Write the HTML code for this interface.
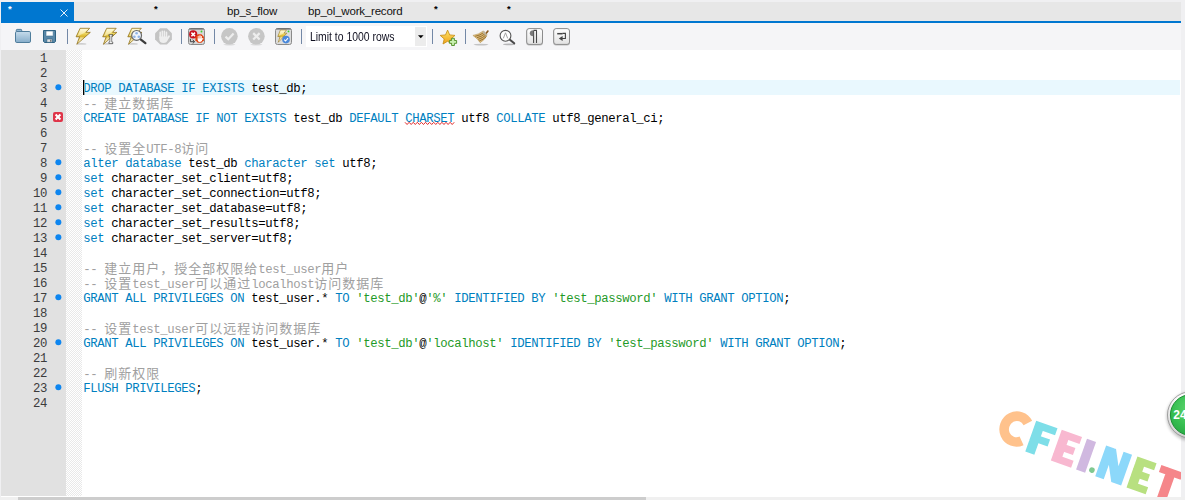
<!DOCTYPE html>
<html><head><meta charset="utf-8"><title>SQL Editor</title>
<style>
html,body{margin:0;padding:0}
body{width:1185px;height:500px;overflow:hidden;position:relative;background:#f0f0f2;font-family:"Liberation Sans",sans-serif}
#tabs{position:absolute;left:1px;top:2px;width:1180px;height:19px;background:#e7e7e7}
#tabline{position:absolute;left:1px;top:21px;width:1180px;height:2px;background:#0077d0}
#tab1{position:absolute;left:0;top:0;width:73px;height:19px;background:#0077d0}
.tt{position:absolute;top:2px;font-size:11.5px;line-height:14px;color:#111;white-space:nowrap;letter-spacing:-0.2px}
.as{position:absolute;top:1px;font-size:9.5px;line-height:12px;color:#000;font-weight:bold}
#tool{position:absolute;left:1px;top:23px;width:1180px;height:27px;background:#f5f5f7}
#ed{position:absolute;left:1px;top:50px;width:1180px;height:447px;background:#fff;overflow:hidden}
#gut{position:absolute;left:1px;top:50px;width:65px;height:446px;background:#e1e1e1}
#fold{position:absolute;left:66px;top:50px;width:16px;height:446px;background:conic-gradient(#e9e9e9 0 25%,#fff 0 50%,#e9e9e9 0 75%,#fff 0) 0 0/2px 2px}
#hl{position:absolute;left:83px;top:80px;width:1097px;height:15px;background:#e9f8fe}
#caret{position:absolute;left:83px;top:80px;width:1px;height:15px;background:#000;border-right:1px solid #9aa}
.l,.n{position:absolute;height:15px;line-height:15px;font-family:"Liberation Mono",monospace;font-size:12.3px;letter-spacing:-0.38px;white-space:pre;color:#000}
.l{left:83.2px}
.n{left:1px;width:46px;text-align:right;color:#3c3c3c}
.k{color:#007fbf}.c{color:#a0a0a0}.s{color:#1f9a28}
.z{font-family:"Liberation Mono","Noto Sans CJK SC",monospace;font-size:13px;letter-spacing:1px;line-height:15px}
.d{position:absolute;left:54.5px;width:6.5px;height:6.5px;border-radius:50%;background:#0e86f0}
#err{position:absolute;left:53px;top:112px;width:10px;height:10px}
#sb{position:absolute;left:0;top:497px;width:1185px;height:3px;background:#f0f0f0}
#sbt{position:absolute;left:18px;top:497px;width:628px;height:3px;background:#cdcdcd}
#wm{position:absolute;left:0;top:0}
</style></head><body>
<div id="tabs"><div id="tab1"></div>
<span class="as" style="left:7px;color:#fff">*</span>
<svg style="position:absolute;left:59px;top:6.5px" width="8" height="8" viewBox="0 0 8 8"><path d="M0.5 0.5L7.5 7.5M7.5 0.5L0.5 7.5" stroke="#e6f0fa" stroke-width="1" fill="none"/></svg>
<span class="as" style="left:153px">*</span>
<span class="tt" style="left:226px">bp_s_flow</span>
<span class="tt" style="left:307px">bp_ol_work_record</span>
<span class="as" style="left:433px">*</span>
<span class="as" style="left:506px">*</span>
</div>
<div id="tabline"></div>
<div id="tool"></div>
<div id="dd" style="position:absolute;left:306px;top:26px;width:121px;height:21px;background:#fff"></div>
<div style="position:absolute;left:415px;top:27px;width:11px;height:19px;background:#ececec"></div>
<div id="ddt" style="position:absolute;left:310px;top:28px;height:17px;line-height:17px;font-size:13px;color:#101020;white-space:nowrap;transform:scaleX(0.8);transform-origin:0 0">Limit to 1000 rows</div>
<svg id="ico" style="position:absolute;left:0;top:23px" width="1185" height="27" viewBox="0 23 1185 27">
<defs>
<linearGradient id="fo" x1="0" y1="0" x2="0" y2="1"><stop offset="0" stop-color="#c6dcec"/><stop offset="1" stop-color="#86adca"/></linearGradient>
<linearGradient id="ly" x1="0" y1="0" x2="0" y2="1"><stop offset="0" stop-color="#fff9cc"/><stop offset="0.3" stop-color="#f0da68"/><stop offset="0.5" stop-color="#d9b62e"/><stop offset="0.72" stop-color="#ead478"/><stop offset="1" stop-color="#f8efbc"/></linearGradient>
<linearGradient id="bx" x1="0" y1="0" x2="0" y2="1"><stop offset="0" stop-color="#ffffff"/><stop offset="1" stop-color="#e2e2e2"/></linearGradient>
<linearGradient id="st" x1="0" y1="0" x2="0" y2="1"><stop offset="0" stop-color="#ffe66a"/><stop offset="1" stop-color="#eea018"/></linearGradient>
<filter id="sh" x="-30%" y="-100%" width="160%" height="300%"><feGaussianBlur stdDeviation="0.6"/></filter>
<g id="bolt"><path d="M80.1 28.3H89.6L85.9 32.4H90.3L76.8 44.3L79.6 36.8H76.1Z" fill="url(#ly)" stroke="#8e6c14" stroke-width="0.75" stroke-linejoin="round"/><path d="M80.7 29.2H87.6L84.2 33.1L78.2 35.9H77.4Z" fill="#fff" opacity="0.45"/><path d="M80.4 37.2L78.3 42.6L84 37.4Z" fill="#fff" opacity="0.35"/></g>
<g id="hand"><path d="M-3.3 -4.2V1M-1.2 -5.3V1M0.9 -5.3V1M3 -4.2V1" fill="none" stroke-width="1.55" stroke-linecap="round"/><path d="M5.5 -0.4L3 3.6" fill="none" stroke-width="1.9" stroke-linecap="round"/><path d="M-4.2 0H3.9V3.2Q3.6 6.4 0 6.4Q-4.2 6.4 -4.2 2.5Z" stroke="none"/></g>
</defs>
<!-- separators -->
<g fill="#7388a6"><rect x="67" y="29" width="1" height="15"/><rect x="181" y="29" width="1" height="15"/><rect x="214" y="29" width="1" height="15"/><rect x="301" y="29" width="1" height="15"/><rect x="432" y="29" width="1" height="15"/><rect x="465" y="29" width="1" height="15"/></g>
<!-- folder -->
<path d="M16.3 31.5V30.2Q16.3 29.4 17.1 29.4H20.9Q21.7 29.4 21.7 30.2V31.5" fill="#8fb4d0" stroke="#4f7d9c" stroke-width="1"/>
<rect x="15.5" y="31.5" width="15" height="11" rx="1.3" fill="url(#fo)" stroke="#4f7d9c" stroke-width="1"/>
<!-- save -->
<path d="M43.5 30.5H55.5V41.3L54.5 42.5H44.5L43.5 41.3Z" fill="#5a88a8" stroke="#2f6282" stroke-width="1"/>
<rect x="46" y="31" width="7.2" height="5" rx="0.6" fill="#fff" stroke="#3c6e8e" stroke-width="0.6"/>
<rect x="46.9" y="39" width="5.3" height="3.2" fill="#e4e4e4" stroke="#2f6282" stroke-width="0.6"/><rect x="50.3" y="39.7" width="1" height="2" fill="#4a4a4a"/>
<!-- bolts -->
<ellipse cx="81.5" cy="43.9" rx="5" ry="0.7" fill="#000" opacity="0.22" filter="url(#sh)"/>
<use href="#bolt"/>
<ellipse cx="108" cy="43.9" rx="5" ry="0.7" fill="#000" opacity="0.22" filter="url(#sh)"/>
<use href="#bolt" x="26.6"/>
<path d="M109.2 34.7H112.6V35.6H111.55V42.3H112.6V43.2H109.2V42.3H110.25V35.6H109.2Z" fill="#fff" stroke="#2a2a2a" stroke-width="1.15" paint-order="stroke" stroke-linejoin="round"/>
<ellipse cx="133" cy="43.9" rx="5" ry="0.7" fill="#000" opacity="0.22" filter="url(#sh)"/>
<use href="#bolt" x="51.7"/>
<path d="M140.6 39.4L145.4 43.2" stroke="#3c3c3c" stroke-width="2.2" stroke-linecap="round"/>
<circle cx="136.6" cy="35.4" r="4.9" fill="#f1f5fb" stroke="#686868" stroke-width="1.2"/>
<circle cx="136.6" cy="33.3" r="1.3" fill="#8fb4e6"/><circle cx="134.4" cy="36.7" r="1.3" fill="#8fb4e6"/><circle cx="138.8" cy="36.7" r="1.3" fill="#8fb4e6"/>
<!-- gray stop -->
<path d="M160.1 28.2H166.9L171.9 33.2V39.4L166.9 44.4H160.1L155.1 39.4V33.2Z" fill="#c4c4c4"/>
<use href="#hand" transform="translate(163.5 36.6)" fill="#eeeeee" stroke="#eeeeee"/>
<!-- toggle box -->
<rect x="188.5" y="28.5" width="16" height="16" rx="2" fill="#d6d6d6" stroke="#8a8a8a" stroke-width="1"/>
<path d="M189.5 29H203.5" stroke="#5e5e5e" stroke-width="1"/>
<path d="M190.4 38.8V41.7H194M192.7 39.9L194.7 41.7L192.7 43.5" fill="none" stroke="#3a3a3a" stroke-width="0.95"/>
<circle cx="193.2" cy="34.4" r="4.1" fill="#c8101e"/><path d="M191.4 32.6L195 36.2M195 32.6L191.4 36.2" stroke="#fff" stroke-width="1.5"/>
<path d="M197.9 34.2H201.4L203.9 36.7V40.3L201.4 42.8H197.9L195.4 40.3V36.7Z" fill="#e2400e"/>
<use href="#hand" transform="translate(199.9 38.6) scale(0.52)" fill="#fff" stroke="#fff"/>
<circle cx="201.5" cy="31.5" r="0.9" fill="#3cd02a"/>
<!-- check / cross circles -->
<ellipse cx="229.4" cy="44.6" rx="6" ry="0.8" fill="#000" opacity="0.10" filter="url(#sh)"/>
<circle cx="229.4" cy="36.3" r="8.3" fill="#c6c6c6"/><path d="M225.5 36.6L228.3 39.3L233.6 33.6" fill="none" stroke="#ededed" stroke-width="2.2"/>
<ellipse cx="256.4" cy="44.6" rx="6" ry="0.8" fill="#000" opacity="0.10" filter="url(#sh)"/>
<circle cx="256.4" cy="36.3" r="8.3" fill="#c6c6c6"/><path d="M253.2 33.1L259.6 39.5M259.6 33.1L253.2 39.5" stroke="#ededed" stroke-width="2.2"/>
<!-- boxed bolt check -->
<rect x="275.5" y="28.5" width="16" height="16" rx="2" fill="#dcdcdc" stroke="#8a8a8a" stroke-width="1"/>
<path d="M276.5 29H290.5" stroke="#5e5e5e" stroke-width="1"/>
<use href="#bolt" transform="translate(229.1 8.2) scale(0.64 0.77)"/>
<circle cx="286" cy="39.6" r="3.8" fill="#4a88da"/><path d="M284.2 39.7L285.5 41L288 38.2" fill="none" stroke="#fff" stroke-width="1.1"/>
<circle cx="288.5" cy="31.4" r="0.9" fill="#3cd02a"/>
<!-- dropdown arrow -->
<path d="M418 35.3H423.6L420.8 38.3Z" fill="#000"/>
<!-- star + plus -->
<path d="M447.6 30.1L449.7 34.9L455 35.4L451 38.9L452.2 44L447.6 41.3L443 44L444.2 38.9L440.2 35.4L445.5 34.9Z" fill="url(#st)" stroke="#c48a12" stroke-width="0.8" stroke-linejoin="round"/>
<path d="M451.6 38.3H454.4V40.5H456.6V43.3H454.4V45.5H451.6V43.3H449.4V40.5H451.6Z" fill="#c9f0b2" stroke="#4c8c22" stroke-width="0.9" stroke-linejoin="round"/>
<!-- broom -->
<ellipse cx="481" cy="44.6" rx="7.5" ry="0.8" fill="#000" opacity="0.2" filter="url(#sh)"/>
<path d="M485.2 33.2L487.2 30.6Q488 29.8 488.6 30.6Q489 31.3 488.3 32L486.4 34.2Z" fill="#8c5a1e"/>
<path d="M472.9 35.4Q478.5 34.6 483.4 30.9L487.1 34.8Q485.6 39.3 480.2 42.7Q477.3 38.2 472.9 35.4Z" fill="#dcbc7c" stroke="#b08c48" stroke-width="0.5"/>
<path d="M475.2 36.3Q480 35.5 484.3 32.2M476.9 37.7Q481.4 36.7 485.3 33.6M478.2 39.3Q482.4 38.2 486 35M479.3 40.9Q483.2 39.6 486.4 36.6" fill="none" stroke="#8c6424" stroke-width="0.85"/>
<path d="M483.4 30.9L487.1 34.8L485.9 35.9L482.3 32Z" fill="#b9b4a4"/>
<!-- magnifier -->
<ellipse cx="509" cy="44.4" rx="6" ry="0.8" fill="#000" opacity="0.25" filter="url(#sh)"/>
<path d="M509.6 39.5L514.2 43.3" stroke="#4a4a4a" stroke-width="2.1" stroke-linecap="round"/>
<circle cx="505.5" cy="35.8" r="5.4" fill="#fff" stroke="#555" stroke-width="1.1"/>
<path d="M503.3 38.4L505.5 32.8L507.7 38.4" fill="none" stroke="#9a9a9a" stroke-width="0.9"/>
<!-- pilcrow box -->
<rect x="526.3" y="29" width="16.6" height="16.4" rx="2.6" fill="#000" opacity="0.22" filter="url(#sh)"/>
<rect x="526.7" y="28.6" width="15.8" height="15.8" rx="2.4" fill="url(#bx)" stroke="#8c8c8c" stroke-width="1"/>
<path d="M533.6 30.4H536.9M533.6 30.4V43M536.5 30.4V43" fill="none" stroke="#484848" stroke-width="1.1"/>
<path d="M533.3 30.3Q529.8 30.3 529.8 33.3Q529.8 36.2 533.3 36.2Z" fill="#7a7a7a"/>
<!-- wrap box -->
<rect x="553.3" y="29" width="16.6" height="16.4" rx="2.6" fill="#000" opacity="0.22" filter="url(#sh)"/>
<rect x="553.7" y="28.6" width="15.8" height="15.8" rx="2.4" fill="url(#bx)" stroke="#8c8c8c" stroke-width="1"/>
<path d="M557.2 33.7H562.6" stroke="#444" stroke-width="1.5"/>
<path d="M562.4 33.4H565.4V38.5H562" fill="none" stroke="#444" stroke-width="1.1"/>
<path d="M558.8 38.5L562.6 36V41Z" fill="#444"/>
</svg>

<div id="ed"></div>
<div id="gut"></div><div id="fold"></div>
<div id="hl"></div>
<div class="n" style="top:52px">1</div><div class="n" style="top:67px">2</div><div class="n" style="top:82px">3</div><div class="n" style="top:97px">4</div><div class="n" style="top:112px">5</div><div class="n" style="top:127px">6</div><div class="n" style="top:142px">7</div><div class="n" style="top:157px">8</div><div class="n" style="top:172px">9</div><div class="n" style="top:187px">10</div><div class="n" style="top:202px">11</div><div class="n" style="top:217px">12</div><div class="n" style="top:232px">13</div><div class="n" style="top:247px">14</div><div class="n" style="top:262px">15</div><div class="n" style="top:277px">16</div><div class="n" style="top:292px">17</div><div class="n" style="top:307px">18</div><div class="n" style="top:322px">19</div><div class="n" style="top:337px">20</div><div class="n" style="top:352px">21</div><div class="n" style="top:367px">22</div><div class="n" style="top:382px">23</div><div class="n" style="top:397px">24</div>
<svg style="position:absolute;left:0;top:0" width="70" height="500" viewBox="0 0 70 500" fill="#0e86f0"><circle cx="58.35" cy="87.15" r="3"/><circle cx="58.35" cy="162.15" r="3"/><circle cx="58.35" cy="177.15" r="3"/><circle cx="58.35" cy="192.15" r="3"/><circle cx="58.35" cy="207.15" r="3"/><circle cx="58.35" cy="222.15" r="3"/><circle cx="58.35" cy="237.15" r="3"/><circle cx="58.35" cy="297.15" r="3"/><circle cx="58.35" cy="342.15" r="3"/><circle cx="58.35" cy="387.15" r="3"/></svg>
<svg id="err" viewBox="0 0 10 10"><rect x="0" y="0" width="10" height="10" rx="2" fill="#df3448"/><path d="M2.6 2.6L7.4 7.4M7.4 2.6L2.6 7.4" stroke="#fff" stroke-width="2.1" fill="none"/></svg>
<div class="l" style="top:82px"><span class="k">DROP DATABASE IF EXISTS </span>test_db;</div><div class="l" style="top:97px"><span class="c">-- <span class="z">建立数据库</span></span></div><div class="l" style="top:112px"><span class="k">CREATE DATABASE IF NOT EXISTS </span>test_db <span class="k">DEFAULT </span><span class="k w">CHARSET</span> utf8 <span class="k">COLLATE </span>utf8_general_ci;</div><div class="l" style="top:142px"><span class="c">-- <span class="z">设置全</span>UTF-8<span class="z">访问</span></span></div><div class="l" style="top:157px"><span class="k">alter database </span>test_db <span class="k">character set </span>utf8;</div><div class="l" style="top:172px"><span class="k">set </span>character_set_client=utf8;</div><div class="l" style="top:187px"><span class="k">set </span>character_set_connection=utf8;</div><div class="l" style="top:202px"><span class="k">set </span>character_set_database=utf8;</div><div class="l" style="top:217px"><span class="k">set </span>character_set_results=utf8;</div><div class="l" style="top:232px"><span class="k">set </span>character_set_server=utf8;</div><div class="l" style="top:262px"><span class="c">-- <span class="z">建立用户，授全部权限给</span>test_user<span class="z">用户</span></span></div><div class="l" style="top:277px"><span class="c">-- <span class="z">设置</span>test_user<span class="z">可以通过</span>localhost<span class="z">访问数据库</span></span></div><div class="l" style="top:292px"><span class="k">GRANT ALL PRIVILEGES ON </span>test_user.* <span class="k">TO </span><span class="s">'test_db'</span>@<span class="s">'%'</span><span class="k"> IDENTIFIED BY </span><span class="s">'test_password'</span><span class="k"> WITH GRANT OPTION</span>;</div><div class="l" style="top:322px"><span class="c">-- <span class="z">设置</span>test_user<span class="z">可以远程访问数据库</span></span></div><div class="l" style="top:337px"><span class="k">GRANT ALL PRIVILEGES ON </span>test_user.* <span class="k">TO </span><span class="s">'test_db'</span>@<span class="s">'localhost'</span><span class="k"> IDENTIFIED BY </span><span class="s">'test_password'</span><span class="k"> WITH GRANT OPTION</span>;</div><div class="l" style="top:367px"><span class="c">-- <span class="z">刷新权限</span></span></div><div class="l" style="top:382px"><span class="k">FLUSH PRIVILEGES</span>;</div>
<div id="caret"></div>
<svg style="position:absolute;left:0;top:0" width="1185" height="500" viewBox="0 0 1185 500"><polyline points="405.0 122.3 407.1 124.5 409.1 122.3 411.2 124.5 413.2 122.3 415.3 124.5 417.3 122.3 419.4 124.5 421.4 122.3 423.5 124.5 425.5 122.3 427.6 124.5 429.6 122.3 431.7 124.5 433.7 122.3 435.8 124.5 437.8 122.3 439.9 124.5 441.9 122.3 444.0 124.5 446.0 122.3 448.1 124.5 450.1 122.3 452.2 124.5 454.2 122.3" fill="none" stroke="#e22a2a" stroke-width="1"/></svg>
<svg id="wm" width="1181" height="497" viewBox="0 0 1181 497" style="pointer-events:none">
<g transform="translate(1036.2 420.7) rotate(19.5)"><path d="M-7.08 23.83A12.5 12.9 0 1 1 -7.08 4.97" fill="none" stroke="#ffc28c" stroke-width="9.6"/><path d="M0.0 0.0h9.6v32.7h-9.6zM0.0 0.0h22.6v7.4h-22.6zM0.0 13.2h19.4v7.4h-19.4z" fill="#7edee8"/><path d="M27.1 0.0h9.6v32.7h-9.6zM27.1 0.0h21.5v7.4h-21.5zM27.1 12.7h19.0v7.4h-19.0zM27.1 25.3h21.5v7.4h-21.5z" fill="#f8b8d0"/><path d="M53.9 0.0h9.6v32.7h-9.6z" fill="#d0b8e0"/><circle cx="69.0" cy="27.9" r="2.8" fill="#80c890"/><path d="M74.2 0.0h9.0v32.7h-9.0zM92.7 0.0h9.0v32.7h-9.0zM74.2 0h10.5L101.7 32.7h-10.5z" fill="#8cd8fa"/><path d="M107.4 0.0h9.6v32.7h-9.6zM107.4 0.0h20.3v7.4h-20.3zM107.4 12.7h17.8v7.4h-17.8zM107.4 25.3h20.3v7.4h-20.3z" fill="#b8e080"/><path d="M132.8 0.0h23.0v7.4h-23.0zM139.5 0.0h9.6v38.7h-9.6z" fill="#f5868a"/></g>
</svg>
<svg id="ball" width="1185" height="500" viewBox="0 0 1185 500" style="position:absolute;left:0;top:0;pointer-events:none">
<defs>
<radialGradient id="gb" cx="0.5" cy="0.35" r="0.7"><stop offset="0" stop-color="#62d672"/><stop offset="0.6" stop-color="#38c052"/><stop offset="1" stop-color="#28a844"/></radialGradient>
<linearGradient id="gr" x1="0" y1="0" x2="0" y2="1"><stop offset="0" stop-color="#ffffff"/><stop offset="1" stop-color="#d0d0d0"/></linearGradient>
<filter id="bl" x="-20%" y="-20%" width="140%" height="140%"><feGaussianBlur stdDeviation="1.6"/></filter>
</defs>
<circle cx="1191" cy="416.5" r="24.5" fill="#000" opacity="0.22" filter="url(#bl)"/>
<circle cx="1190.7" cy="415" r="23.2" fill="url(#gr)" stroke="#8e8e8e" stroke-width="0.8"/>
<circle cx="1190.7" cy="415" r="20.3" fill="url(#gb)" stroke="#1d8f35" stroke-width="1"/>
<text x="1173.3" y="419.3" font-family="Liberation Sans, sans-serif" font-weight="bold" font-size="12" fill="#fff">24</text>
</svg>
<div id="sb"></div><div id="sbt"></div>
</body></html>
